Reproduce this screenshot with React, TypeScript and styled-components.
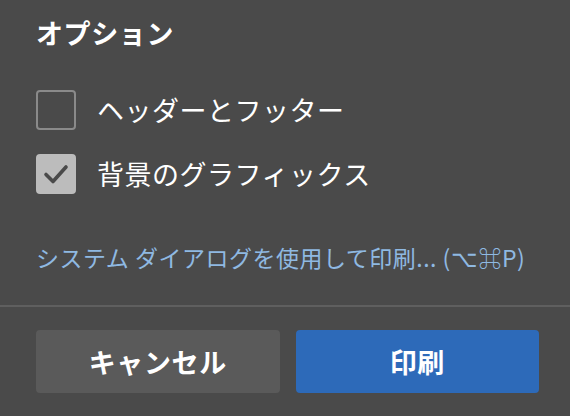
import styled, { createGlobalStyle } from "styled-components";

const GlobalStyle = createGlobalStyle`
  html, body {
    margin: 0;
    padding: 0;
    background: #4a4a4a;
  }
  body {
    font-family: "Noto Sans CJK JP", "Noto Sans", sans-serif;
    color: #ffffff;
  }
`;

const Panel = styled.div`
  width: 570px;
  height: 416px;
  background: #4a4a4a;
  display: flex;
  flex-direction: column;
  overflow: hidden;
`;

const Body = styled.div`
  padding: 14px 30px 0 36px;
  display: flex;
  flex-direction: column;
`;

const Title = styled.h2`
  margin: 0;
  font-size: 27px;
  line-height: 38px;
  font-weight: 700;
  letter-spacing: 0.6px;
`;

const Options = styled.div`
  margin-top: 38px;
  display: flex;
  flex-direction: column;
  gap: 24px;
`;

const Row = styled.label`
  display: flex;
  align-items: center;
  gap: 21px;
  font-size: 27px;
  line-height: 40px;
  letter-spacing: 0.5px;
`;

const Box = styled.span<{ $checked?: boolean }>`
  width: 40px;
  height: 40px;
  box-sizing: border-box;
  border-radius: 4px;
  border: 2px solid ${(p) => (p.$checked ? "#bcbcbc" : "#8a8a8a")};
  background: ${(p) => (p.$checked ? "#bcbcbc" : "transparent")};
  display: grid;
  place-items: center;
  flex-shrink: 0;
`;

const Link = styled.a`
  margin-top: 48px;
  color: #8fb9e2;
  font-size: 23px;
  line-height: 30px;
  text-decoration: none;
  letter-spacing: 0.5px;
  white-space: nowrap;
`;

const Divider = styled.div`
  margin-top: 33px;
  height: 2px;
  background: #5f5f5f;
`;

const Footer = styled.div`
  padding: 23px 31px 0 36px;
  display: grid;
  grid-template-columns: 1fr 1fr;
  gap: 16px;
`;

const Button = styled.button<{ $primary?: boolean }>`
  height: 63px;
  border: none;
  border-radius: 4px;
  background: ${(p) => (p.$primary ? "#2d6ab9" : "#5a5a5a")};
  color: #ffffff;
  font-family: inherit;
  font-size: 27px;
  font-weight: 700;
  letter-spacing: 0.6px;
  cursor: pointer;
`;

const Check = () => (
  <svg width="26" height="22" viewBox="0 0 26 22">
    <path
      d="M3 11.5 L10 18.5 L23 4"
      fill="none"
      stroke="#4a4a4a"
      strokeWidth="3.6"
      strokeLinecap="round"
      strokeLinejoin="round"
    />
  </svg>
);

export default function App() {
  return (
    <>
      <GlobalStyle />
      <Panel>
        <Body>
          <Title>オプション</Title>
          <Options>
            <Row>
              <Box />
              ヘッダーとフッター
            </Row>
            <Row>
              <Box $checked>
                <Check />
              </Box>
              背景のグラフィックス
            </Row>
          </Options>
          <Link href="#">システム ダイアログを使用して印刷... (⌥⌘P)</Link>
        </Body>
        <Divider />
        <Footer>
          <Button>キャンセル</Button>
          <Button $primary>印刷</Button>
        </Footer>
      </Panel>
    </>
  );
}
